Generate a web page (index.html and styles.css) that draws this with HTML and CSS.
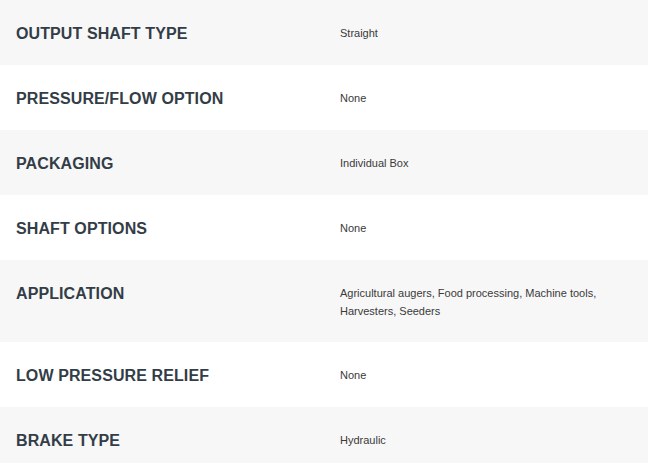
FILE: index.html
```html
<!DOCTYPE html>
<html>
<head>
<meta charset="utf-8">
<link rel="stylesheet" href="styles.css">
</head>
<body>
<div class="specs">
  <div class="row">
    <div class="label">OUTPUT SHAFT TYPE</div>
    <div class="value">Straight</div>
  </div>
  <div class="row">
    <div class="label">PRESSURE/FLOW OPTION</div>
    <div class="value">None</div>
  </div>
  <div class="row">
    <div class="label">PACKAGING</div>
    <div class="value">Individual Box</div>
  </div>
  <div class="row">
    <div class="label">SHAFT OPTIONS</div>
    <div class="value">None</div>
  </div>
  <div class="row">
    <div class="label">APPLICATION</div>
    <div class="value">Agricultural augers, Food processing, Machine tools, Harvesters, Seeders</div>
  </div>
  <div class="row">
    <div class="label">LOW PRESSURE RELIEF</div>
    <div class="value">None</div>
  </div>
  <div class="row">
    <div class="label">BRAKE TYPE</div>
    <div class="value">Hydraulic</div>
  </div>
</div>
</body>
</html>
```
FILE: styles.css
```css
html, body {
  margin: 0;
  padding: 0;
  background: #ffffff;
}
.specs {
  display: flex;
  flex-direction: column;
  font-family: "Liberation Sans", Arial, sans-serif;
}
.row {
  display: grid;
  grid-template-columns: 324px 1fr;
  padding: 24px 0 22px;
}
.row:nth-child(odd) {
  background: #f7f7f7;
}
.label {
  padding: 0 16px;
  font-size: 16px;
  line-height: 19px;
  font-weight: bold;
  letter-spacing: 0.1px;
  color: #333d47;
}
.value {
  padding: 0 40px 0 16px;
  font-size: 11px;
  line-height: 18px;
  color: #3a3a3a;
}
```
